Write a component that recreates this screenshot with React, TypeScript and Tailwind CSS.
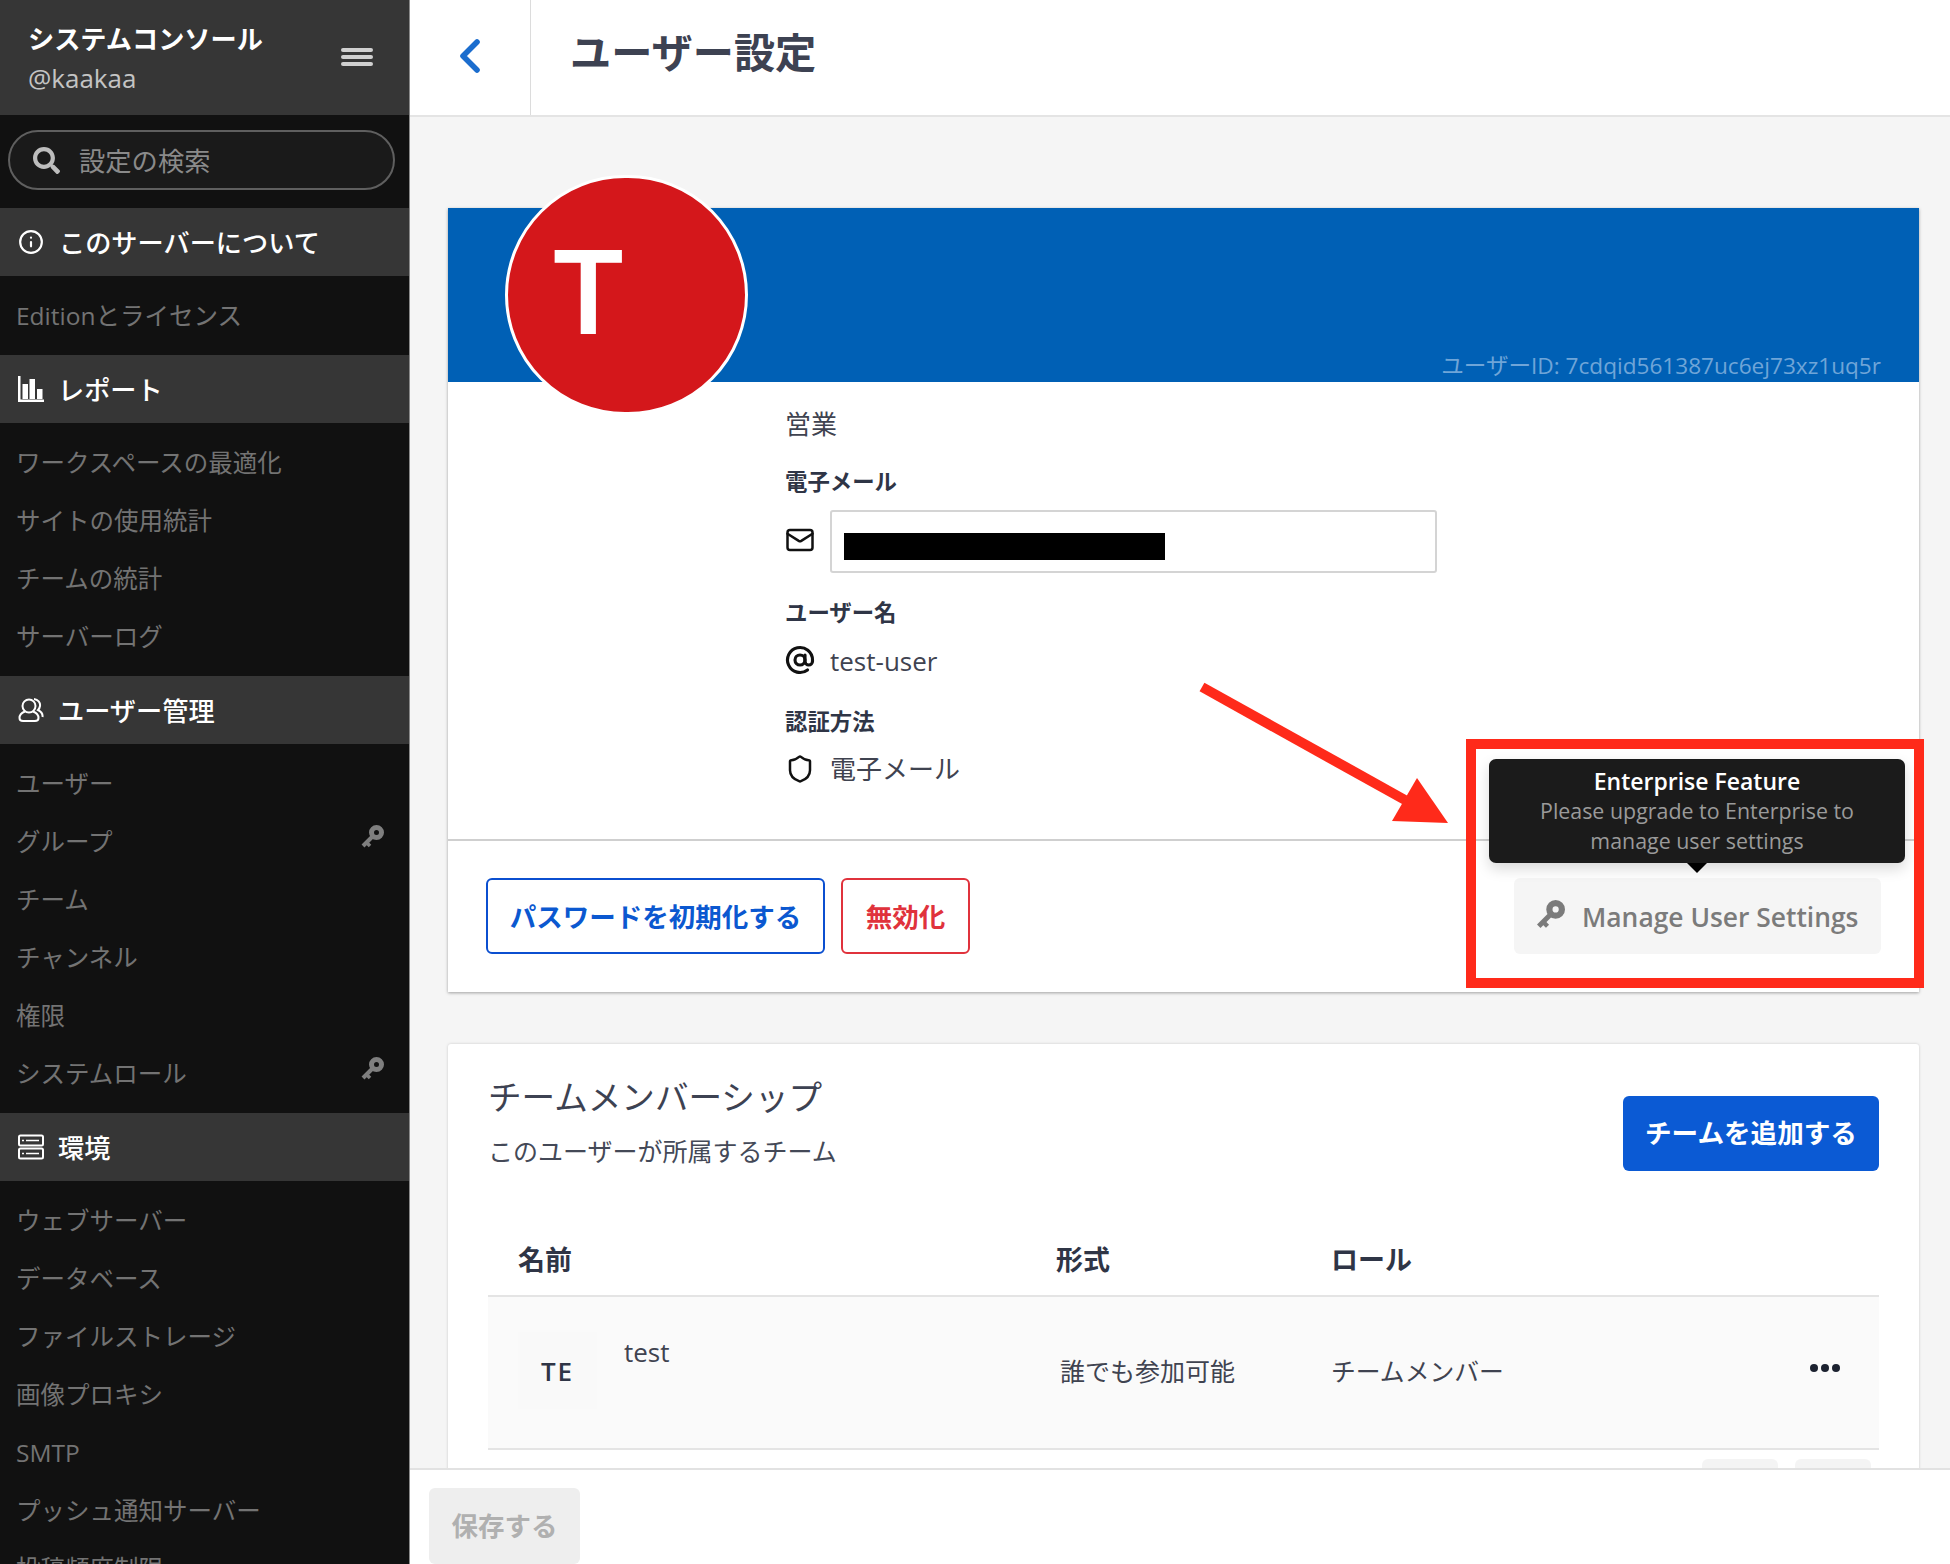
import React from "react";
import { FaSearch } from "react-icons/fa";
import { ChevronLeft, Mail, AtSign, Shield, Info } from "lucide-react";

function KeyIcon({ className }: { className: string }) {
  return (
    <svg viewBox="0 0 24 24" className={className} fill="none" stroke="currentColor">
      <circle cx="16.500" cy="7.500" r="5" strokeWidth="5" />
      <path d="M13 11 L3 21" strokeWidth="4" />
      <path d="M6.500 17.500 L10 21" strokeWidth="3.500" />
    </svg>
  );
}

function BarsIcon() {
  return (
    <svg viewBox="0 0 26 26" className="w-[26px] h-[26px]" fill="white">
      <path d="M0 0h2.500v23.500H26V26H0z" />
      <path d="M4.500 8h5.500v15H4.500zM11.500 3h5.500v20h-5.500zM19 13h5.500v10H19z" />
    </svg>
  );
}
function UsersIcon() {
  return (
    <svg viewBox="0 0 26 26" className="w-[26px] h-[26px]" fill="none" stroke="white" strokeWidth="2">
      <circle cx="11" cy="9" r="6.500" />
      <path d="M7 14.500C3 16 1.500 18 1.500 21c0 2 1.500 3 3.500 3h12c2 0 3.500-1 3.500-3 0-3-1.500-5-5.500-6.500" />
      <path d="M16 2c4 .5 6.500 3.500 6 7-.2 1.500-1 3-2 4 3 1.500 5 3.500 4.500 7" />
    </svg>
  );
}
function ServerIcon() {
  return (
    <svg viewBox="0 0 26 26" className="w-[26px] h-[26px]" fill="none" stroke="white" strokeWidth="2">
      <rect x="1" y="1.500" width="24" height="10" rx="1.500" />
      <rect x="1" y="14.500" width="24" height="10" rx="1.500" />
      <path d="M8 6.500h13M8 19.500h13" strokeWidth="1.500" />
      <path d="M4 6.500h2M4 19.500h2" strokeWidth="1.500" />
    </svg>
  );
}

function Section({ icon, label, gap }: { icon: React.ReactNode; label: string; gap: string }) {
  return (
    <div className="h-[68px] bg-[#363636] flex items-center pl-[18px] text-white text-[26.2px] leading-none font-medium">
      <span className={"w-[26px] h-[26px] flex items-center justify-center shrink-0 " + gap}>{icon}</span>
      <span className="pt-[2px]">{label}</span>
    </div>
  );
}

function Item({ label, locked }: { label: string; locked?: boolean }) {
  return (
    <div className="h-[58px] flex items-center justify-between pl-[16px] pr-[25px] text-[#737373] text-[24.5px] leading-none">
      <span className="pt-[2px]">{label}</span>
      {locked && <KeyIcon className="w-[24px] h-[24px] text-[#7f7f7f] -mt-[9px]" />}
    </div>
  );
}

function Group({ items }: { items: { label: string; locked?: boolean }[] }) {
  return (
    <div className="pt-[10px] pb-[11px]">
      {items.map((i) => (
        <Item key={i.label} {...i} />
      ))}
    </div>
  );
}

function Sidebar() {
  return (
    <aside className="w-[410px] shrink-0 h-full overflow-hidden bg-[#111111] border-r border-[#8a8a8a]">
      <div className="h-[115px] bg-[#363636] flex items-center justify-between pl-[28px] pr-[36px]">
        <div>
          <div className="text-white text-[26.2px] leading-[36px] font-bold mt-[1px]">システムコンソール</div>
          <div className="text-[#c4c4c4] text-[26px] leading-[36px] mt-[3px]">@kaakaa</div>
        </div>
        <div className="flex flex-col gap-[3px] w-[32px] mt-[-2px]">
          <span className="h-[4px] bg-[#d0d0d0] rounded-sm" />
          <span className="h-[4px] bg-[#d0d0d0] rounded-sm" />
          <span className="h-[4px] bg-[#d0d0d0] rounded-sm" />
        </div>
      </div>
      <div className="pt-[15px] pb-[18px] px-[8px]">
        <div className="h-[60px] w-[387px] rounded-full border-2 border-[#5f5f5f] bg-[#1a1a1a] flex items-center pl-[23px] text-[#8a8a8a] text-[26.3px] leading-none">
          <FaSearch className="text-[#bdbdbd] text-[27px] mr-[19px]" />
          <span className="pt-[2px]">設定の検索</span>
        </div>
      </div>
      <Section icon={<Info className="w-[30px] h-[30px] text-white" strokeWidth={2} />} gap="mr-[15px]" label="このサーバーについて" />
      <Group items={[{ label: "Editionとライセンス" }]} />
      <Section icon={<BarsIcon />} gap="mr-[14px]" label="レポート" />
      <Group items={[{ label: "ワークスペースの最適化" }, { label: "サイトの使用統計" }, { label: "チームの統計" }, { label: "サーバーログ" }]} />
      <Section icon={<UsersIcon />} gap="mr-[14px]" label="ユーザー管理" />
      <Group items={[{ label: "ユーザー" }, { label: "グループ", locked: true }, { label: "チーム" }, { label: "チャンネル" }, { label: "権限" }, { label: "システムロール", locked: true }]} />
      <Section icon={<ServerIcon />} gap="mr-[14px]" label="環境" />
      <Group items={[{ label: "ウェブサーバー" }, { label: "データベース" }, { label: "ファイルストレージ" }, { label: "画像プロキシ" }, { label: "SMTP" }, { label: "プッシュ通知サーバー" }, { label: "投稿頻度制限" }]} />
    </aside>
  );
}

function UserCard() {
  return (
    <div className="relative bg-white shadow-[0_1px_3px_rgba(0,0,0,0.35)]">
      <div className="h-[174px] bg-[#0060b5] flex items-end justify-end pr-[38px] pb-[1px] text-[#6fa5d8] text-[22.6px] leading-[30px]">
        ユーザーID: 7cdqid561387uc6ej73xz1uq5r
      </div>
      <div className="absolute left-[57px] top-[-33px] w-[243px] h-[240px] rounded-full bg-[#d4171b] border-[3px] border-white overflow-hidden">
        <span className="absolute left-[42px] top-[44px] text-white text-[116px] leading-[140px] font-semibold font-[Inter]">T</span>
      </div>
      <div className="pl-[337px] text-[#2f3546]">
        <div className="pt-[24px] text-[26px] leading-[36px] text-[#3f4350]">営業</div>
        <div className="mt-[25px] text-[22.4px] leading-[30px] font-semibold">電子メール</div>
        <div className="mt-[13px] flex items-center h-[63px]">
          <Mail className="w-[30px] h-[30px] text-[#111] mr-[15px] -mt-[3px]" strokeWidth={2} />
          <div className="w-[607px] h-[63px] border-2 border-[#d4d4d4] rounded-[3px] flex items-end pl-[12px] pb-[11px]">
            <div className="w-[321px] h-[27px] bg-black" />
          </div>
        </div>
        <div className="mt-[25px] text-[22.4px] leading-[30px] font-semibold">ユーザー名</div>
        <div className="mt-[15px] flex items-center h-[36px] text-[26px] text-[#3f4350]">
          <AtSign className="w-[30px] h-[30px] text-[#111] mr-[15px] -mt-[3px]" strokeWidth={2.5} />
          test-user
        </div>
        <div className="mt-[28px] text-[22.4px] leading-[30px] font-semibold">認証方法</div>
        <div className="mt-[14px] flex items-center h-[36px] text-[26px] text-[#3f4350]">
          <Shield className="w-[30px] h-[30px] text-[#111] mr-[15px]" strokeWidth={2} />
          電子メール
        </div>
      </div>
      <div className="mt-[52px] border-t-2 border-[#cfcfcf] pt-[37px] pb-[38px] pl-[38px] pr-[38px] flex items-center">
        <div className="h-[76px] w-[339px] border-2 border-[#0b4fd0] rounded-[6px] flex items-center justify-center text-[#0b58d0] text-[26.5px] font-bold">
          <span className="pt-[3px]">パスワードを初期化する</span>
        </div>
        <div className="ml-[16px] h-[76px] w-[129px] border-2 border-[#e0323c] rounded-[6px] flex items-center justify-center text-[#e0323c] text-[26.5px] font-bold">
          <span className="pt-[3px]">無効化</span>
        </div>
        <div className="relative ml-auto h-[76px] w-[367px] bg-[#f5f5f5] rounded-[6px] flex items-center pl-[21px] text-[#7b7b7b] text-[26.4px] font-semibold">
          <KeyIcon className="w-[30px] h-[30px] mr-[17px] -mt-[3px]" />
          <span className="pt-[3px]">Manage User Settings</span>
          <div className="absolute left-[-25px] bottom-[91px] w-[416px] h-[104px] bg-[#1b1b1b] rounded-[7px] shadow-[0_6px_14px_rgba(0,0,0,0.15)] flex flex-col items-center justify-center text-[21.4px] leading-[30px] font-medium text-[#9a9a9a]">
            <div className="text-white text-[23px] font-semibold">Enterprise Feature</div>
            <div>Please upgrade to Enterprise to</div>
            <div>manage user settings</div>
            <span className="absolute left-1/2 -translate-x-1/2 top-full w-0 h-0 border-x-[10px] border-x-transparent border-t-[10px] border-t-black" />
          </div>
        </div>
      </div>
    </div>
  );
}

function TeamCard() {
  return (
    <div className="mt-[52px] bg-white shadow-[0_0_3px_rgba(0,0,0,0.18)] rounded-t-[3px] pt-[30px] pl-[40px] pr-[40px] pb-[40px] text-[#2f3546]">
      <div className="flex justify-between items-start">
        <div>
          <div className="text-[33.6px] leading-[46px] text-[#3d4252]">チームメンバーシップ</div>
          <div className="mt-[14px] text-[25px] leading-[34px] text-[#444957]">このユーザーが所属するチーム</div>
        </div>
        <div className="mt-[22px] h-[75px] w-[256px] bg-[#0b5ad4] rounded-[6px] flex items-center justify-center text-white text-[26.6px] font-bold">
          チームを追加する
        </div>
      </div>
      <div className="mt-[55px] h-[71px] border-b-2 border-[#e4e4e4] grid grid-cols-[568px_275px_1fr] items-center text-[27px] font-semibold">
        <div className="pl-[30px]">名前</div>
        <div>形式</div>
        <div>ロール</div>
      </div>
      <div className="h-[153px] border-b-2 border-[#e4e4e4] bg-[#fafafa] grid grid-cols-[568px_275px_1fr] text-[25px] leading-[36px] text-[#3f4350]">
        <div className="pl-[30px] pt-[35px] flex items-start">
          <div className="w-[79px] h-[77px] bg-[#f9f9f9] flex items-center justify-center font-semibold text-[26px] tracking-[2px] text-[#2f3546]">TE</div>
          <div className="ml-[27px] mt-[2px] text-[26px]">test</div>
        </div>
        <div className="pl-[4px] pt-[56px]">誰でも参加可能</div>
        <div className="pt-[56px] flex justify-between">
          <span className="text-[24.8px]">チームメンバー</span>
          <span className="flex gap-[3px] h-[8px] mt-[11px] mr-[39px]">
            <i className="w-[8px] h-[8px] rounded-full bg-[#1c2230]" />
            <i className="w-[8px] h-[8px] rounded-full bg-[#1c2230]" />
            <i className="w-[8px] h-[8px] rounded-full bg-[#1c2230]" />
          </span>
        </div>
      </div>
      <div className="mt-[9px] flex justify-end gap-[17px] pr-[8px]">
        <div className="w-[76px] h-[60px] bg-[#f4f4f4] rounded-[6px]" />
        <div className="w-[76px] h-[60px] bg-[#f4f4f4] rounded-[6px]" />
      </div>
    </div>
  );
}

export default function App() {
  return (
    <div className="relative w-[1950px] h-[1564px] flex overflow-hidden bg-[#f5f5f5] font-['Open_Sans','Noto_Sans_CJK_JP',sans-serif]">
      <Sidebar />
      <main className="flex-1 min-w-0 h-full flex flex-col">
        <header className="h-[117px] shrink-0 bg-white border-b-2 border-[#e4e4e4] flex items-stretch">
          <div className="w-[121px] border-r border-[#dcdcdc] flex items-center justify-center">
            <ChevronLeft className="w-[56px] h-[56px] text-[#1b6dce] -ml-[1px] -mt-[4px]" strokeWidth={2.4} />
          </div>
          <h1 className="pl-[39px] pt-[24px] text-[41.2px] leading-[56px] font-bold text-[#3d4252]">ユーザー設定</h1>
        </header>
        <div className="flex-1 min-h-0 overflow-hidden pt-[91px] pl-[38px] pr-[31px]">
          <UserCard />
          <TeamCard />
        </div>
        <footer className="h-[96px] shrink-0 bg-white border-t-2 border-[#e2e2e2] pl-[19px] pt-[18px] overflow-hidden">
          <div className="w-[151px] h-[76px] bg-[#eeeeee] rounded-[6px] flex items-center justify-center text-[#b0b0b0] text-[26.5px] font-bold">
            <span className="pt-[2px]">保存する</span>
          </div>
        </footer>
      </main>

      <div className="absolute left-[1466px] top-[739px] w-[458px] h-[249px] border-[10px] border-[#ff2a1a] pointer-events-none" />
      <svg className="absolute left-[1190px] top-[675px] w-[270px] h-[160px] pointer-events-none" viewBox="0 0 270 160">
        <path d="M12 12 L215 125" stroke="#ff2a1a" strokeWidth="10" />
        <polygon points="227,103 258,148 202,146" fill="#ff2a1a" />
      </svg>
    </div>
  );
}
